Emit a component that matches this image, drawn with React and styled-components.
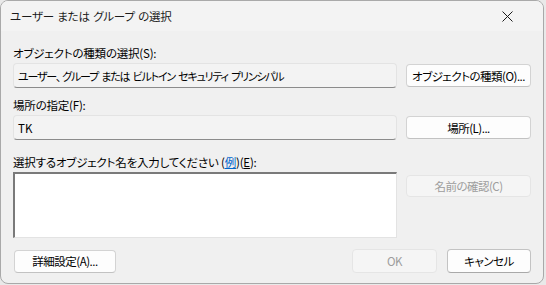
import React from "react";
import styled, { createGlobalStyle } from "styled-components";

const GlobalStyle = createGlobalStyle`
    html, body {
        margin: 0;
        padding: 0;
        background: #e9e9e9;
        width: 546px;
        height: 285px;
        overflow: hidden;
    }
    body {
        font-family: "Noto Sans CJK JP", "Noto Sans", sans-serif;
        font-feature-settings: "palt";
        font-size: 11.5px;
        color: #000;
    }
`;

const Window = styled.div`
    box-sizing: border-box;
    width: 544px;
    height: 284px;
    background: #f0f0f0;
    border: 1px solid #a9a9a9;
    border-radius: 8px;
    overflow: hidden;
    display: flex;
    flex-direction: column;
`;

const TitleBar = styled.div`
    height: 30px;
    flex: none;
    background: #f3f3f3;
    display: flex;
    align-items: center;
    justify-content: space-between;
    padding-left: 9px;
`;

const Title = styled.span`
    color: #1b1b1b;
    letter-spacing: -0.2px;
    word-spacing: 1px;
`;

const CloseButton = styled.div`
    width: 46px;
    height: 30px;
    display: flex;
    align-items: center;
    justify-content: center;
    margin-right: 13px;
`;

const Body = styled.div`
    flex: 1;
    padding: 14px 11px 0 12px;
    display: grid;
    grid-template-columns: 384px 125px;
    column-gap: 9px;
    align-content: start;
`;

const Label = styled.div`
    grid-column: 1 / 3;
    line-height: 16px;
    height: 16px;
    margin-top: ${(p) => p.$gap || 0}px;
    margin-bottom: 2px;
    white-space: nowrap;
    letter-spacing: -0.2px;
`;

const Field = styled.div`
    box-sizing: border-box;
    height: 25px;
    background: #f3f3f3;
    border: 1px solid #e3e3e3;
    border-bottom-color: #8b8b8b;
    border-radius: 4px;
    padding: 0 4px;
    display: flex;
    align-items: center;
    white-space: pre;
    overflow: hidden;
    font-size: ${(p) => p.$tight ? "11px" : "11.5px"};
    letter-spacing: ${(p) => p.$tight ? "-1.2px" : "0"};
    word-spacing: ${(p) => p.$tight ? "2px" : "0"};
`;

const Comma = styled.span`
    margin-right: 2px;
`;

const TextArea = styled.div`
    box-sizing: border-box;
    height: 66px;
    background: #fff;
    border-top: 2px solid #7a7a7a;
    border-left: 2px solid #7a7a7a;
    border-right: 1px solid #e3e3e3;
    border-bottom: 1px solid #e3e3e3;
    box-shadow: inset -1px -1px 0 #fff;
`;

const Button = styled.button`
    box-sizing: border-box;
    font: inherit;
    height: ${(p) => p.$h || 23}px;
    width: ${(p) => p.$w ? `${p.$w}px` : "100%"};
    align-self: ${(p) => p.$align || "center"};
    margin-top: ${(p) => p.$top || 0}px;
    background: ${(p) => (p.disabled ? "#f5f5f5" : "#fdfdfd")};
    color: ${(p) => (p.disabled ? "#9d9d9d" : "#000")};
    border: 1px solid ${(p) => (p.disabled ? "#e5e5e5" : p.$default ? "#c3c3c3" : "#d3d3d3")};
    border-bottom-color: ${(p) => (p.disabled ? "#e5e5e5" : p.$default ? "#a9a9a9" : "#c2c2c2")};
    border-radius: 4px;
    padding: 0;
    display: flex;
    align-items: center;
    justify-content: center;
    white-space: nowrap;
    letter-spacing: -0.5px;
`;

const Footer = styled.div`
    grid-column: 1 / 3;
    margin-top: 11px;
    display: flex;
    align-items: center;
    gap: 10px;
    padding-left: 1px;
`;

const Spacer = styled.div`
    flex: 1;
`;

const Link = styled.span`
    color: #0066cc;
    text-decoration: underline;
`;

const Mnemonic = styled.span`
    text-decoration: underline;
`;

export default function App() {
    return (
        <>
            <GlobalStyle />
            <Window>
                <TitleBar>
                    <Title>ユーザー または グループ の選択</Title>
                    <CloseButton>
                        <svg width="11" height="11" viewBox="0 0 11 11">
                            <path d="M0.5 0.5 L10.5 10.5 M10.5 0.5 L0.5 10.5" stroke="#1b1b1b" strokeWidth="1" fill="none" />
                        </svg>
                    </CloseButton>
                </TitleBar>
                <Body>
                    <Label>オブジェクトの種類の選択(S):</Label>
                    <Field $tight>ユーザー<Comma>、</Comma>グループ または ビルトイン セキュリティ プリンシパル</Field>
                    <Button>オブジェクトの種類(O)...</Button>

                    <Label $gap={9}>場所の指定(F):</Label>
                    <Field>TK</Field>
                    <Button>場所(L)...</Button>

                    <Label $gap={14}>
                        選択するオブジェクト名を入力してください (<Link>例</Link>)(<Mnemonic>E</Mnemonic>):
                    </Label>
                    <TextArea />
                    <Button disabled $h={22} $align="start" $top={3}>名前の確認(C)</Button>

                    <Footer>
                        <Button $w={102} $h={23}>詳細設定(A)...</Button>
                        <Spacer />
                        <Button disabled $w={85} $h={24}>OK</Button>
                        <Button $default $w={84} $h={24}>キャンセル</Button>
                    </Footer>
                </Body>
            </Window>
        </>
    );
}
